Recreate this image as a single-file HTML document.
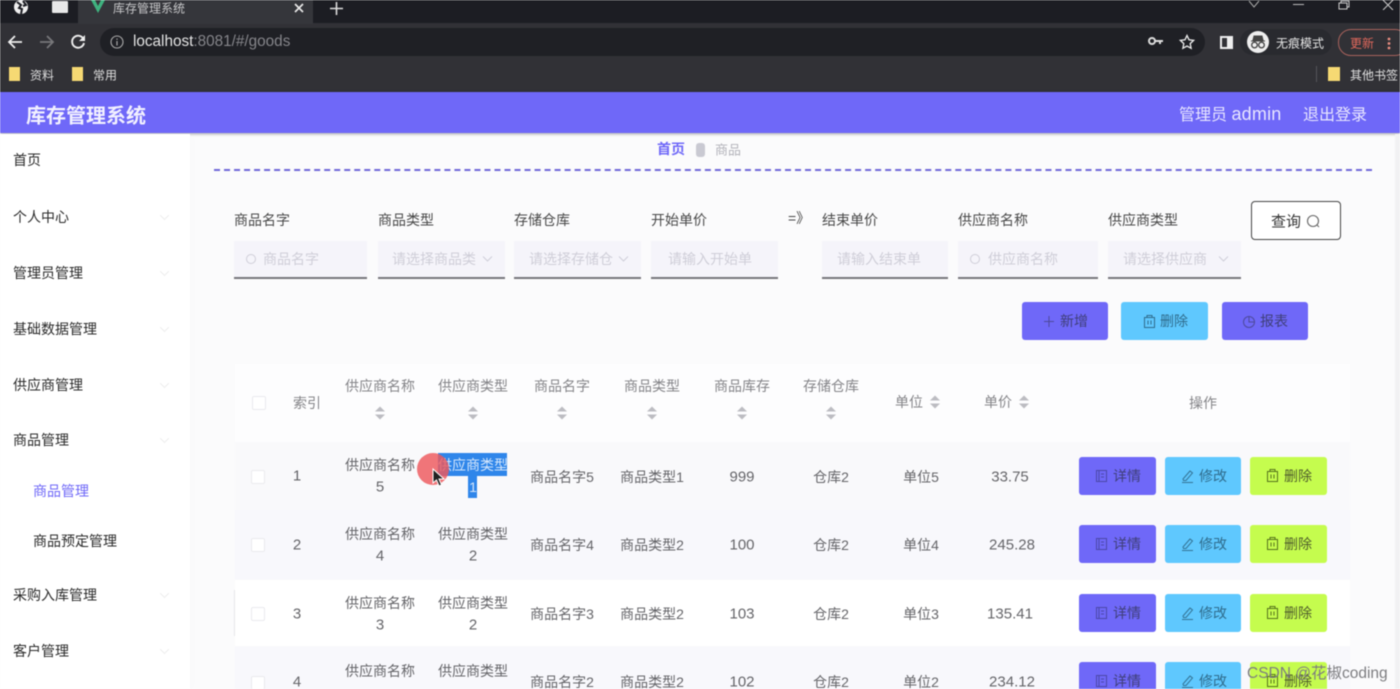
<!DOCTYPE html>
<html lang="zh"><head><meta charset="utf-8"><title>库存管理系统</title>
<style>
*{box-sizing:border-box}
html,body{margin:0;padding:0;width:1400px;height:689px;overflow:hidden;background:#fbfbfc}
body{font-family:"Liberation Sans","Noto Sans CJK SC",sans-serif;font-size:14px;color:#555;position:relative}
#w{position:absolute;left:0;top:0;width:1400px;height:689px;overflow:hidden;filter:blur(.6px)}
.b,.c,.l,svg{position:absolute}
.c{transform:translate(-50%,-50%);white-space:nowrap}
.l{transform:translateY(-50%);white-space:nowrap}
.m{font-size:14px;color:#2b2b2b}
.f{font-size:14px;color:#484848}
.inp{top:241px;height:38px;background:#f5f4fa;border-bottom:2px solid #77767c}
.ph{font-size:14px;color:#cfced8}
.th{font-size:14px;color:#858589}
.td{font-size:14px;color:#656569}
.n{font-size:15px}
.cb{width:14px;height:14px;background:#fff;border:1px solid #eaeaee;border-radius:2px}
.btn{width:77px;height:38px;border-radius:3px}
.p{background:#6f68f8}.s{background:#5fc8fe}.g{background:#c5fc4e}
.bt{font-size:14px;color:#3f3f79}
.so{width:10px;height:13px;transform:translate(-50%,-50%)}
.so:before,.so:after{content:"";position:absolute;left:0;border-left:5px solid transparent;border-right:5px solid transparent}
.so:before{top:0;border-bottom:5px solid #bcbcc1}
.so:after{bottom:0;border-top:5px solid #bcbcc1}
.ch{left:160px;width:9px;height:5px}
</style></head><body><div id="w">
<!-- browser chrome -->
<div class="b" style="left:0;top:0;width:1400px;height:23px;background:#1c1d23"></div>
<div class="b" style="left:0;top:23px;width:1400px;height:69px;background:#313136"></div>
<div class="b" style="left:78px;top:0;width:235px;height:24px;background:#35363b"></div>
<svg style="left:13px;top:0" width="16" height="15" viewBox="0 0 16 15"><circle cx="8" cy="7" r="7" fill="#f0f0f0"/><path d="M4 2l4 3-2 3 3 1-1 5M10 1l3 4-3 1" fill="none" stroke="#1c1d23" stroke-width="2"/></svg>
<div class="b" style="left:52px;top:1px;width:16px;height:12px;background:#e8e8e8;border-radius:1px"></div>
<svg style="left:90px;top:0" width="16" height="14" viewBox="0 0 16 14"><path d="M1 0L8 13 15 0H11L8 6 5 0Z" fill="#3fb27f"/></svg>
<div class="l" style="left:113px;top:8px;font-size:12px;color:#c6c6c8">库存管理系统</div>
<svg style="left:294px;top:3px" width="10" height="10"><path d="M1 1l8 8M9 1l-8 8" stroke="#e8e8e8" stroke-width="1.7"/></svg>
<svg style="left:330px;top:2px" width="13" height="13"><path d="M6.500 0v13M0 6.500h13" stroke="#ddd" stroke-width="1.600"/></svg>
<svg style="left:1248px;top:0" width="12" height="8"><path d="M1 1l5 6 5-6" fill="none" stroke="#aaa" stroke-width="1"/></svg>
<div class="b" style="left:1293px;top:4px;width:11px;height:1px;background:#bbb"></div>
<svg style="left:1338px;top:0" width="12" height="10"><path d="M1 3h8v6H1zM3 3V1h8v6H9" fill="none" stroke="#ccc" stroke-width="1"/></svg>
<svg style="left:1382px;top:0" width="13" height="10"><path d="M1 0l10 10M11 0L1 10" stroke="#ccc" stroke-width="1"/></svg>
<svg style="left:7px;top:34px" width="16" height="16"><path d="M15 8H2M8 2L2 8l6 6" fill="none" stroke="#eee" stroke-width="1.800"/></svg>
<svg style="left:39px;top:34px" width="16" height="16"><path d="M1 8h13M8 2l6 6-6 6" fill="none" stroke="#77777a" stroke-width="1.800"/></svg>
<svg style="left:70px;top:34px" width="16" height="16"><path d="M13.500 5A6 6 0 1 0 14 9" fill="none" stroke="#eee" stroke-width="1.900"/><path d="M15 1v6H9z" fill="#eee"/></svg>
<div class="b" style="left:100px;top:28px;width:1105px;height:28px;background:#1f2025;border-radius:14px"></div>
<svg style="left:110px;top:35px" width="14" height="14"><circle cx="7" cy="7" r="6" fill="none" stroke="#aaa" stroke-width="1.100"/><path d="M7 6v4.500M7 3.500v1.300" stroke="#aaa" stroke-width="1.200"/></svg>
<div class="l" style="left:133px;top:42px;font-size:15.300px;color:#e4e4e4">localhost<span style="color:#85858a">:8081/#/goods</span></div>
<svg style="left:1148px;top:36px" width="15" height="11"><circle cx="4" cy="5" r="3" fill="none" stroke="#ddd" stroke-width="2"/><path d="M7 5h8M12 5v3" stroke="#ddd" stroke-width="2"/></svg>
<svg style="left:1179px;top:34px" width="16" height="16" viewBox="0 0 16 16"><path d="M8 1.500l2 4.300 4.600.6-3.400 3.200.9 4.700L8 12l-4.100 2.300.9-4.700L1.400 6.400 6 5.800z" fill="none" stroke="#eee" stroke-width="1.300"/></svg>
<div class="b" style="left:1220px;top:36px;width:13px;height:13px;border:2px solid #eee;border-left-width:2px;background:linear-gradient(90deg,#313136 58%,#eee 58%)"></div>
<div class="b" style="left:1240px;top:29px;width:92px;height:26px;background:#292a2f;border-radius:13px"></div>
<div class="b" style="left:1247px;top:31px;width:22px;height:22px;background:#eee;border-radius:50%"></div>
<svg style="left:1249px;top:35px" width="18" height="15"><path d="M5 1h8l1 4H4zM2 6h14" stroke="#444" fill="#444" stroke-width="1"/><circle cx="5.500" cy="10" r="2.800" fill="none" stroke="#444" stroke-width="1.300"/><circle cx="12.500" cy="10" r="2.800" fill="none" stroke="#444" stroke-width="1.300"/></svg>
<div class="l" style="left:1276px;top:43px;font-size:12px;color:#e6e6e6">无痕模式</div>
<div class="b" style="left:1338px;top:29px;width:70px;height:27px;border:1px solid #a8625c;border-radius:13px"></div>
<div class="l" style="left:1350px;top:43px;font-size:12px;color:#e0685c">更新</div>
<svg style="left:1387px;top:37px" width="4" height="13"><circle cx="2" cy="2" r="1.400" fill="#e88d80"/><circle cx="2" cy="6.500" r="1.400" fill="#e88d80"/><circle cx="2" cy="11" r="1.400" fill="#e88d80"/></svg>
<div class="b" style="left:9px;top:67px;width:11px;height:14px;background:#f6d973"></div>
<div class="l" style="left:30px;top:75px;font-size:12px;color:#ddd">资料</div>
<div class="b" style="left:72px;top:67px;width:11px;height:14px;background:#f6d973"></div>
<div class="l" style="left:93px;top:75px;font-size:12px;color:#ddd">常用</div>
<div class="b" style="left:1316px;top:66px;width:1px;height:16px;background:#55555a"></div>
<div class="b" style="left:1328px;top:67px;width:12px;height:14px;background:#f6d973"></div>
<div class="l" style="left:1350px;top:75px;font-size:12px;color:#e0e0e0">其他书签</div>
<!-- header -->
<div class="b" style="left:0;top:92px;width:1400px;height:41px;background:#6f68f8;box-shadow:0 1px 3px rgba(0,0,0,.35)"></div>
<div class="l" style="left:26px;top:114px;font-size:20px;font-weight:bold;color:#f2f1ff">库存管理系统</div>
<div class="l" style="left:1179px;top:113px;font-size:16px;color:#e8e6ff">管理员 <span style="font-size:18px;letter-spacing:.2px">admin</span></div>
<div class="l" style="left:1303px;top:113px;font-size:16px;color:#e8e6ff">退出登录</div>
<!-- sidebar -->
<div class="b" style="left:0;top:134px;width:190px;height:555px;background:#fff;box-shadow:3px 0 8px rgba(0,0,0,.012)"></div>
<div class="b" style="left:1395px;top:134px;width:5px;height:555px;background:#f1f1f3"></div>
<div class="l m" style="left:13px;top:160px">首页</div>
<div class="l m" style="left:13px;top:217px">个人中心</div>
<div class="l m" style="left:13px;top:273px">管理员管理</div>
<div class="l m" style="left:13px;top:329px">基础数据管理</div>
<div class="l m" style="left:13px;top:385px">供应商管理</div>
<div class="l m" style="left:13px;top:440px">商品管理</div>
<div class="l" style="left:33px;top:491px;font-size:14px;color:#6f68f8">商品管理</div>
<div class="l m" style="left:33px;top:541px">商品预定管理</div>
<div class="l m" style="left:13px;top:595px">采购入库管理</div>
<div class="l m" style="left:13px;top:651px">客户管理</div>
<svg class="ch" style="top:215px"><path d="M0 0l4.500 4.500L9 0" fill="none" stroke="#eee"/></svg>
<svg class="ch" style="top:271px"><path d="M0 0l4.500 4.500L9 0" fill="none" stroke="#eee"/></svg>
<svg class="ch" style="top:327px"><path d="M0 0l4.500 4.500L9 0" fill="none" stroke="#eee"/></svg>
<svg class="ch" style="top:383px"><path d="M0 0l4.500 4.500L9 0" fill="none" stroke="#eee"/></svg>
<svg class="ch" style="top:438px"><path d="M0 0l4.500 4.500L9 0" fill="none" stroke="#eee"/></svg>
<svg class="ch" style="top:593px"><path d="M0 0l4.500 4.500L9 0" fill="none" stroke="#eee"/></svg>
<svg class="ch" style="top:649px"><path d="M0 0l4.500 4.500L9 0" fill="none" stroke="#eee"/></svg>
<!-- breadcrumb -->
<div class="l" style="left:657px;top:149px;font-size:14px;font-weight:bold;color:#6f68f8">首页</div>
<div class="b" style="left:696px;top:143px;width:9px;height:14px;background:#c9c9d2;border-radius:3px"></div>
<div class="l" style="left:715px;top:149px;font-size:13px;color:#b3b3ba">商品</div>
<div class="b" style="left:214px;top:169px;width:1158px;border-top:2px dashed #6f68d8"></div>
<!-- filters -->
<div class="l f" style="left:234px;top:220px">商品名字</div>
<div class="l f" style="left:378px;top:220px">商品类型</div>
<div class="l f" style="left:514px;top:220px">存储仓库</div>
<div class="l f" style="left:651px;top:220px">开始单价</div>
<div class="l f" style="left:788px;top:218px">=》</div>
<div class="l f" style="left:822px;top:220px">结束单价</div>
<div class="l f" style="left:958px;top:220px">供应商名称</div>
<div class="l f" style="left:1108px;top:220px">供应商类型</div>
<div class="b inp" style="left:234px;width:133px"></div>
<div class="b inp" style="left:378px;width:127px"></div>
<div class="b inp" style="left:514px;width:127px"></div>
<div class="b inp" style="left:651px;width:127px"></div>
<div class="b inp" style="left:822px;width:126px"></div>
<div class="b inp" style="left:958px;width:140px"></div>
<div class="b inp" style="left:1108px;width:133px"></div>
<svg style="left:245px;top:253px" width="12" height="12"><circle cx="6" cy="6" r="4.500" fill="none" stroke="#cfced8"/></svg>
<div class="l ph" style="left:263px;top:259px">商品名字</div>
<div class="l ph" style="left:392px;top:259px">请选择商品类</div>
<div class="l ph" style="left:529px;top:259px">请选择存储仓</div>
<div class="l ph" style="left:668px;top:259px">请输入开始单</div>
<div class="l ph" style="left:837px;top:259px">请输入结束单</div>
<svg style="left:969px;top:253px" width="12" height="12"><circle cx="6" cy="6" r="4.500" fill="none" stroke="#cfced8"/></svg>
<div class="l ph" style="left:988px;top:259px">供应商名称</div>
<div class="l ph" style="left:1123px;top:259px">请选择供应商</div>
<svg style="left:482px;top:255px" width="11" height="8"><path d="M1 1.500l4.500 4.500L10 1.500" fill="none" stroke="#cfced8"/></svg>
<svg style="left:618px;top:255px" width="11" height="8"><path d="M1 1.500l4.500 4.500L10 1.500" fill="none" stroke="#cfced8"/></svg>
<svg style="left:1218px;top:255px" width="11" height="8"><path d="M1 1.500l4.500 4.500L10 1.500" fill="none" stroke="#cfced8"/></svg>
<div class="b" style="left:1251px;top:201px;width:90px;height:39px;background:#fff;border:1px solid #444;border-radius:4px"></div>
<div class="l" style="left:1271px;top:221px;font-size:15px;color:#333">查询</div>
<svg style="left:1306px;top:214px" width="15" height="15"><circle cx="7" cy="7" r="5.500" fill="none" stroke="#666" stroke-width="1.100"/><path d="M11 11l2 2" stroke="#666"/></svg>
<!-- action buttons -->
<div class="b btn p" style="left:1022px;top:302px;width:86px;border-radius:3px"></div>
<div class="b btn s" style="left:1121px;top:302px;width:87px"></div>
<div class="b btn p" style="left:1222px;top:302px;width:86px"></div>
<svg style="left:1043px;top:315px" width="12" height="13"><path d="M6 1v11M1 6.500h10" stroke="#4d4a9c" stroke-width="1"/></svg>
<div class="l bt" style="left:1060px;top:321px">新增</div>
<svg style="left:1143px;top:314px" width="13" height="15"><use href="#tr" stroke="#2f6c8d"/></svg>
<div class="l" style="left:1160px;top:321px;font-size:14px;color:#2f6c8d">删除</div>
<svg style="left:1242px;top:314px" width="15" height="15"><circle cx="7" cy="8" r="5.500" fill="none" stroke="#4d4a9c"/><path d="M7 2.500V8h5" fill="none" stroke="#4d4a9c"/></svg>
<div class="l bt" style="left:1260px;top:321px">报表</div>
<!-- table bg -->
<div class="b" style="left:235px;top:364px;width:1115px;height:78px;background:#fdfdfe"></div>
<div class="b" style="left:235px;top:442px;width:1115px;height:68px;background:#f9f9fb"></div>
<div class="b" style="left:235px;top:510px;width:1115px;height:70px;background:#f8f8fc"></div>
<div class="b" style="left:235px;top:580px;width:1115px;height:66px;background:#fff"></div>
<div class="b" style="left:235px;top:646px;width:1115px;height:43px;background:#f8f8fc"></div>
<div class="b" style="left:234px;top:590px;width:1px;height:46px;background:#e6e6ea"></div>
<!-- table header -->
<div class="b cb" style="left:252px;top:396px"></div>
<div class="c th" style="left:307px;top:403px">索引</div>
<div class="c th" style="left:380px;top:386px">供应商名称</div><div class="b so" style="left:380px;top:413px"></div>
<div class="c th" style="left:473px;top:386px">供应商类型</div><div class="b so" style="left:473px;top:413px"></div>
<div class="c th" style="left:562px;top:386px">商品名字</div><div class="b so" style="left:562px;top:413px"></div>
<div class="c th" style="left:652px;top:386px">商品类型</div><div class="b so" style="left:652px;top:413px"></div>
<div class="c th" style="left:742px;top:386px">商品库存</div><div class="b so" style="left:742px;top:413px"></div>
<div class="c th" style="left:831px;top:386px">存储仓库</div><div class="b so" style="left:831px;top:413px"></div>
<div class="c th" style="left:909px;top:402px">单位</div><div class="b so" style="left:935px;top:402px"></div>
<div class="c th" style="left:998px;top:402px">单价</div><div class="b so" style="left:1024px;top:402px"></div>
<div class="c th" style="left:1203px;top:403px">操作</div>
<!-- rows -->
<div class="b cb" style="left:251px;top:470px"></div>
<div class="c td n" style="left:297px;top:476px">1</div>
<div class="c td" style="left:380px;top:465px">供应商名称</div><div class="c td n" style="left:380px;top:487px">5</div>
<div class="b" style="left:438px;top:453px;width:69px;height:23px;background:#2f86ea"></div>
<div class="b" style="left:468px;top:476px;width:9px;height:22px;background:#2f86ea"></div>
<div class="c" style="left:473px;top:465px;color:#d4e6fb">供应商类型</div><div class="c" style="left:473px;top:487px;color:#d4e6fb">1</div>
<div class="c td" style="left:562px;top:477px">商品名字5</div><div class="c td" style="left:652px;top:477px">商品类型1</div><div class="c td n" style="left:742px;top:477px">999</div><div class="c td" style="left:831px;top:477px">仓库2</div><div class="c td" style="left:921px;top:477px">单位5</div><div class="c td n" style="left:1010px;top:477px">33.75</div>
<div class="b cb" style="left:251px;top:538px"></div>
<div class="c td n" style="left:297px;top:545px">2</div>
<div class="c td" style="left:380px;top:534px">供应商名称</div><div class="c td n" style="left:380px;top:556px">4</div>
<div class="c td" style="left:473px;top:534px">供应商类型</div><div class="c td n" style="left:473px;top:556px">2</div>
<div class="c td" style="left:562px;top:545px">商品名字4</div><div class="c td" style="left:652px;top:545px">商品类型2</div><div class="c td n" style="left:742px;top:545px">100</div><div class="c td" style="left:831px;top:545px">仓库2</div><div class="c td" style="left:921px;top:545px">单位4</div><div class="c td n" style="left:1012px;top:545px">245.28</div>
<div class="b cb" style="left:251px;top:607px"></div>
<div class="c td n" style="left:297px;top:614px">3</div>
<div class="c td" style="left:380px;top:603px">供应商名称</div><div class="c td n" style="left:380px;top:625px">3</div>
<div class="c td" style="left:473px;top:603px">供应商类型</div><div class="c td n" style="left:473px;top:625px">2</div>
<div class="c td" style="left:562px;top:614px">商品名字3</div><div class="c td" style="left:652px;top:614px">商品类型2</div><div class="c td n" style="left:742px;top:614px">103</div><div class="c td" style="left:831px;top:614px">仓库2</div><div class="c td" style="left:921px;top:614px">单位3</div><div class="c td n" style="left:1010px;top:614px">135.41</div>
<div class="b cb" style="left:251px;top:676px"></div>
<div class="c td n" style="left:297px;top:682px">4</div>
<div class="c td" style="left:380px;top:671px">供应商名称</div>
<div class="c td" style="left:473px;top:671px">供应商类型</div>
<div class="c td" style="left:562px;top:682px">商品名字2</div><div class="c td" style="left:652px;top:682px">商品类型2</div><div class="c td n" style="left:742px;top:682px">102</div><div class="c td" style="left:831px;top:682px">仓库2</div><div class="c td" style="left:921px;top:682px">单位2</div><div class="c td n" style="left:1012px;top:682px">234.12</div>
<!-- row buttons -->
<svg width="0" height="0" style="left:0;top:0"><defs><g id="tr" fill="none" stroke-width="1"><path d="M1.500 3.500h10v10h-10zM4 3.500v-2h5v2M5 6.500v4M8 6.500v4"/></g><g id="dt" fill="none" stroke="#4b48a8" stroke-width="1"><path d="M1.500 1.500h10v11h-10zM4 1.500v11M6 5h3M6 8h3"/></g><g id="pn" fill="none" stroke="#347496" stroke-width="1"><path d="M2 10L9 2l2.500 2L5 11.500H2.500zM1 13.500h11"/></g></defs></svg>
<div class="b btn p" style="left:1079px;top:457px"></div><div class="b btn s" style="left:1165px;top:457px;width:76px"></div><div class="b btn g" style="left:1250px;top:457px"></div>
<svg style="left:1095px;top:469px" width="13" height="14"><use href="#dt"/></svg><div class="l bt" style="left:1113px;top:476px">详情</div>
<svg style="left:1181px;top:469px" width="13" height="14"><use href="#pn"/></svg><div class="l" style="left:1199px;top:476px;color:#2f6c8d">修改</div>
<svg style="left:1266px;top:468px" width="13" height="15"><use href="#tr" stroke="#55731c"/></svg><div class="l" style="left:1284px;top:476px;color:#4f5c2c">删除</div>
<div class="b btn p" style="left:1079px;top:525px"></div><div class="b btn s" style="left:1165px;top:525px;width:76px"></div><div class="b btn g" style="left:1250px;top:525px"></div>
<svg style="left:1095px;top:537px" width="13" height="14"><use href="#dt"/></svg><div class="l bt" style="left:1113px;top:544px">详情</div>
<svg style="left:1181px;top:537px" width="13" height="14"><use href="#pn"/></svg><div class="l" style="left:1199px;top:544px;color:#2f6c8d">修改</div>
<svg style="left:1266px;top:536px" width="13" height="15"><use href="#tr" stroke="#55731c"/></svg><div class="l" style="left:1284px;top:544px;color:#4f5c2c">删除</div>
<div class="b btn p" style="left:1079px;top:594px"></div><div class="b btn s" style="left:1165px;top:594px;width:76px"></div><div class="b btn g" style="left:1250px;top:594px"></div>
<svg style="left:1095px;top:606px" width="13" height="14"><use href="#dt"/></svg><div class="l bt" style="left:1113px;top:613px">详情</div>
<svg style="left:1181px;top:606px" width="13" height="14"><use href="#pn"/></svg><div class="l" style="left:1199px;top:613px;color:#2f6c8d">修改</div>
<svg style="left:1266px;top:605px" width="13" height="15"><use href="#tr" stroke="#55731c"/></svg><div class="l" style="left:1284px;top:613px;color:#4f5c2c">删除</div>
<div class="b btn p" style="left:1079px;top:662px"></div><div class="b btn s" style="left:1165px;top:662px;width:76px"></div><div class="b btn g" style="left:1250px;top:662px"></div>
<svg style="left:1095px;top:674px" width="13" height="14"><use href="#dt"/></svg><div class="l bt" style="left:1113px;top:681px">详情</div>
<svg style="left:1181px;top:674px" width="13" height="14"><use href="#pn"/></svg><div class="l" style="left:1199px;top:681px;color:#2f6c8d">修改</div>
<svg style="left:1266px;top:673px" width="13" height="15"><use href="#tr" stroke="#55731c"/></svg><div class="l" style="left:1284px;top:681px;color:#4f5c2c">删除</div>
<!-- cursor highlight -->
<div class="b" style="left:417px;top:453px;width:32px;height:32px;border-radius:50%;background:rgba(238,88,92,.82)"></div>
<svg style="left:432px;top:468px" width="14" height="20"><path d="M1 1v14l3.500-3 2.500 6 2.500-1-2.500-6h5z" fill="#222" stroke="#fff" stroke-width="1"/></svg>
<!-- watermark -->
<div class="l" style="left:1247px;top:672px;font-size:15.500px;color:#7d7d80">CSDN @花椒coding</div>
</div></body></html>
